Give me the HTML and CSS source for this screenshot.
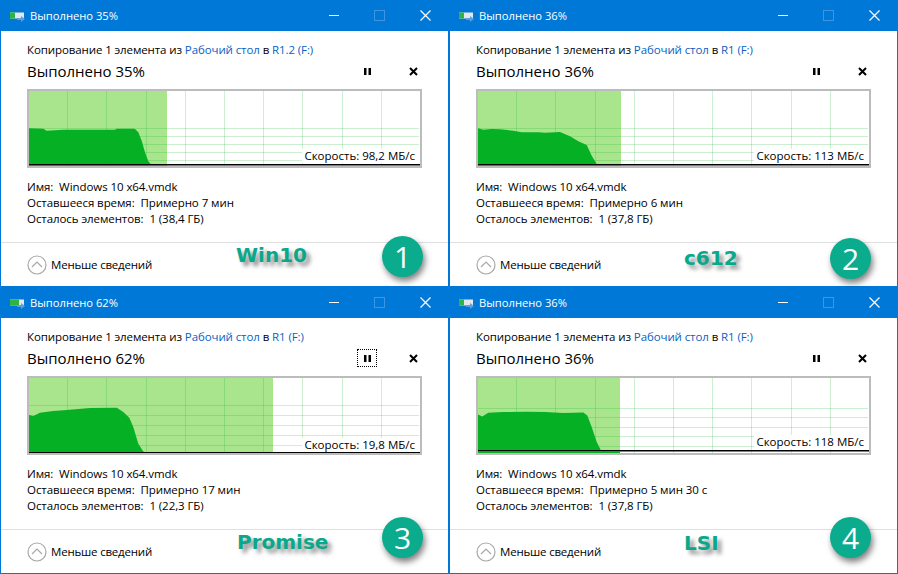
FILE: index.html
```html
<!DOCTYPE html>
<html lang="ru">
<head>
  <meta charset="UTF-8">
  <title>Копирование файлов</title>
  <link rel="stylesheet" href="styles.css">
</head>

<body>
  <div class="desktop">

    <!-- Win10 -->
    <div class="window">
      <div class="titlebar">
        <svg class="app-icon" width="16" height="14" viewBox="0 0 16 14"><rect x="0" y="3.500" width="14" height="6" fill="#e4e8ea"/><rect x="0" y="3.500" width="5" height="6" fill="#2fb344"/><path d="M7 9h4V7l4 3-4 3v-2H7z" fill="#5b9fdf"/></svg>
        <span class="title">Выполнено 35%</span>
        <div class="win-buttons">
          <span class="win-min"></span>
          <span class="win-max"></span>
          <svg class="win-close" width="11" height="11" viewBox="0 0 11 11"><path d="M.5.5l10 10M10.500.5l-10 10" stroke="#fff" stroke-width="1.200" fill="none"/></svg>
        </div>
      </div>
      <div class="content">
        <div class="copy-line">Копирование 1 элемента из <a>Рабочий стол</a> в <a>R1.2 (F:)</a></div>
        <div class="status-row">
          <span class="status">Выполнено 35%</span>
          <div class="controls">
            <span class="ctl"><svg width="9" height="9" viewBox="0 0 9 9"><path d="M1 1h2.500v7H1zM5.500 1H8v7H5.500z" fill="#000"/></svg></span>
            <span class="ctl"><svg width="9" height="9" viewBox="0 0 9 9"><path d="M1 1l7 7M8 1L1 8" stroke="#000" stroke-width="2" fill="none"/></svg></span>
          </div>
        </div>
        <div class="chart">
          <svg width="391" height="75" viewBox="0 0 391 75">
            <rect class="done" width="138" height="75"/>
            <path class="grid" d="M38.500 0v75M77.500 0v75M117.500 0v75M156.500 0v75M195.500 0v75M234.500 0v75M273.500 0v75M313.500 0v75M352.500 0v75M0 37.500h390M0 45.500h390M0 53.500h390M0 61.500h390M0 69.500h390"/>
            <path class="flow" d="M0 37.300L14.300 37.700L17.700 39.700L34.300 38.700H86L87.700 37.700H104.300L106 38L109.300 41.300L112.700 49.700L116 61.300L119.300 70.300L122.700 74H0Z"/>
            <rect x="0" y="73" width="391" height="1.500"/>
          </svg>
          <span class="speed">Скорость: 98,2 МБ/с</span>
        </div>
        <div class="details">
          <div>Имя:&nbsp; Windows 10 x64.vmdk</div>
          <div>Оставшееся время:&nbsp; Примерно 7 мин</div>
          <div>Осталось элементов:&nbsp; 1 (38,4 ГБ)</div>
        </div>
      </div>
      <div class="footer">
        <svg width="20" height="20" viewBox="0 0 20 20"><circle cx="10" cy="10" r="9" fill="none" stroke="#a8a8a8" stroke-width="1.200"/><path d="M5 12l5-5 5 5" fill="none" stroke="#a8a8a8" stroke-width="1.200"/></svg>
        <span>Меньше сведений</span>
      </div>
      <span class="mark mark-1">Win10</span>
      <span class="badge badge-1">1</span>
    </div>

    <!-- c612 -->
    <div class="window">
      <div class="titlebar">
        <svg class="app-icon" width="16" height="14" viewBox="0 0 16 14"><rect x="0" y="3.500" width="14" height="6" fill="#e4e8ea"/><rect x="0" y="3.500" width="5" height="6" fill="#2fb344"/><path d="M7 9h4V7l4 3-4 3v-2H7z" fill="#5b9fdf"/></svg>
        <span class="title">Выполнено 36%</span>
        <div class="win-buttons">
          <span class="win-min"></span>
          <span class="win-max"></span>
          <svg class="win-close" width="11" height="11" viewBox="0 0 11 11"><path d="M.5.5l10 10M10.500.5l-10 10" stroke="#fff" stroke-width="1.200" fill="none"/></svg>
        </div>
      </div>
      <div class="content">
        <div class="copy-line">Копирование 1 элемента из <a>Рабочий стол</a> в <a>R1 (F:)</a></div>
        <div class="status-row">
          <span class="status">Выполнено 36%</span>
          <div class="controls">
            <span class="ctl"><svg width="9" height="9" viewBox="0 0 9 9"><path d="M1 1h2.500v7H1zM5.500 1H8v7H5.500z" fill="#000"/></svg></span>
            <span class="ctl"><svg width="9" height="9" viewBox="0 0 9 9"><path d="M1 1l7 7M8 1L1 8" stroke="#000" stroke-width="2" fill="none"/></svg></span>
          </div>
        </div>
        <div class="chart">
          <svg width="391" height="75" viewBox="0 0 391 75">
            <rect class="done" width="143" height="75"/>
            <path class="grid" d="M38.500 0v75M77.500 0v75M117.500 0v75M156.500 0v75M195.500 0v75M234.500 0v75M273.500 0v75M313.500 0v75M352.500 0v75M0 37.500h390M0 45.500h390M0 53.500h390M0 61.500h390M0 69.500h390"/>
            <path class="flow" d="M0 37.300L5.300 38.700L13.700 38L22 38.300L35.300 39.700L43.700 41.300H60.300L67 41.700L82 41L92 45.300L100.300 50.300L108.700 54L113.700 64.700L118.700 73L120.300 74H0Z"/>
            <rect x="0" y="73" width="391" height="1.500"/>
            <rect class="flow" x="0" y="74.500" width="143" height=".5"/>
          </svg>
          <span class="speed">Скорость: 113 МБ/с</span>
        </div>
        <div class="details">
          <div>Имя:&nbsp; Windows 10 x64.vmdk</div>
          <div>Оставшееся время:&nbsp; Примерно 6 мин</div>
          <div>Осталось элементов:&nbsp; 1 (37,8 ГБ)</div>
        </div>
      </div>
      <div class="footer">
        <svg width="20" height="20" viewBox="0 0 20 20"><circle cx="10" cy="10" r="9" fill="none" stroke="#a8a8a8" stroke-width="1.200"/><path d="M5 12l5-5 5 5" fill="none" stroke="#a8a8a8" stroke-width="1.200"/></svg>
        <span>Меньше сведений</span>
      </div>
      <span class="mark mark-2">c612</span>
      <span class="badge badge-2">2</span>
    </div>

    <!-- Promise -->
    <div class="window">
      <div class="titlebar">
        <svg class="app-icon" width="16" height="14" viewBox="0 0 16 14"><rect x="0" y="3.500" width="14" height="6" fill="#e4e8ea"/><rect x="0" y="3.500" width="9" height="6" fill="#2fb344"/><path d="M7 9h4V7l4 3-4 3v-2H7z" fill="#5b9fdf"/></svg>
        <span class="title">Выполнено 62%</span>
        <div class="win-buttons">
          <span class="win-min"></span>
          <span class="win-max"></span>
          <svg class="win-close" width="11" height="11" viewBox="0 0 11 11"><path d="M.5.5l10 10M10.500.5l-10 10" stroke="#fff" stroke-width="1.200" fill="none"/></svg>
        </div>
      </div>
      <div class="content">
        <div class="copy-line">Копирование 1 элемента из <a>Рабочий стол</a> в <a>R1 (F:)</a></div>
        <div class="status-row">
          <span class="status">Выполнено 62%</span>
          <div class="controls">
            <span class="ctl ctl-focus"><svg width="9" height="9" viewBox="0 0 9 9"><path d="M1 1h2.500v7H1zM5.500 1H8v7H5.500z" fill="#000"/></svg></span>
            <span class="ctl"><svg width="9" height="9" viewBox="0 0 9 9"><path d="M1 1l7 7M8 1L1 8" stroke="#000" stroke-width="2" fill="none"/></svg></span>
          </div>
        </div>
        <div class="chart">
          <svg width="391" height="75" viewBox="0 0 391 75">
            <rect class="done" width="244" height="75"/>
            <path class="grid" d="M38.500 0v75M77.500 0v75M117.500 0v75M156.500 0v75M195.500 0v75M234.500 0v75M273.500 0v75M313.500 0v75M352.500 0v75M0 27.500h390M0 37.500h390M0 47.500h390M0 57.500h390M0 67.500h390"/>
            <path class="flow" d="M0 37L4.300 38L11 34.700L24.300 33L37.700 32L61 30L87.700 29.700L94.300 34L100.300 39.700L104.300 49L109.300 65.700L114.300 73.400L116.700 75H0Z"/>
            <rect x="0" y="74" width="391" height="1.500"/>
          </svg>
          <span class="speed speed-low">Скорость: 19,8 МБ/с</span>
        </div>
        <div class="details">
          <div>Имя:&nbsp; Windows 10 x64.vmdk</div>
          <div>Оставшееся время:&nbsp; Примерно 17 мин</div>
          <div>Осталось элементов:&nbsp; 1 (22,3 ГБ)</div>
        </div>
      </div>
      <div class="footer">
        <svg width="20" height="20" viewBox="0 0 20 20"><circle cx="10" cy="10" r="9" fill="none" stroke="#a8a8a8" stroke-width="1.200"/><path d="M5 12l5-5 5 5" fill="none" stroke="#a8a8a8" stroke-width="1.200"/></svg>
        <span>Меньше сведений</span>
      </div>
      <span class="mark mark-3">Promise</span>
      <span class="badge badge-3">3</span>
    </div>

    <!-- LSI -->
    <div class="window">
      <div class="titlebar">
        <svg class="app-icon" width="16" height="14" viewBox="0 0 16 14"><rect x="0" y="3.500" width="14" height="6" fill="#e4e8ea"/><rect x="0" y="3.500" width="5" height="6" fill="#2fb344"/><path d="M7 9h4V7l4 3-4 3v-2H7z" fill="#5b9fdf"/></svg>
        <span class="title">Выполнено 36%</span>
        <div class="win-buttons">
          <span class="win-min"></span>
          <span class="win-max"></span>
          <svg class="win-close" width="11" height="11" viewBox="0 0 11 11"><path d="M.5.5l10 10M10.500.5l-10 10" stroke="#fff" stroke-width="1.200" fill="none"/></svg>
        </div>
      </div>
      <div class="content">
        <div class="copy-line">Копирование 1 элемента из <a>Рабочий стол</a> в <a>R1 (F:)</a></div>
        <div class="status-row">
          <span class="status">Выполнено 36%</span>
          <div class="controls">
            <span class="ctl"><svg width="9" height="9" viewBox="0 0 9 9"><path d="M1 1h2.500v7H1zM5.500 1H8v7H5.500z" fill="#000"/></svg></span>
            <span class="ctl"><svg width="9" height="9" viewBox="0 0 9 9"><path d="M1 1l7 7M8 1L1 8" stroke="#000" stroke-width="2" fill="none"/></svg></span>
          </div>
        </div>
        <div class="chart">
          <svg width="391" height="75" viewBox="0 0 391 75">
            <rect class="done" width="142" height="75"/>
            <path class="grid" d="M38.500 0v75M77.500 0v75M117.500 0v75M156.500 0v75M195.500 0v75M234.500 0v75M273.500 0v75M313.500 0v75M352.500 0v75M0 30.500h390M0 39.500h390M0 49.500h390M0 58.500h390M0 68.500h390"/>
            <path class="flow" d="M0 36.400L4.300 38.400L10.300 34.700L25.300 34L48.700 33.700L67 34L85.300 35L105.300 34.400L109.300 37.400L113.700 49L118.700 64L123 72.400H0Z"/>
            <rect x="0" y="72" width="391" height="1.500"/>
            <rect class="flow" x="0" y="73.500" width="142" height="1.500"/>
          </svg>
          <span class="speed speed-high">Скорость: 118 МБ/с</span>
        </div>
        <div class="details">
          <div>Имя:&nbsp; Windows 10 x64.vmdk</div>
          <div>Оставшееся время:&nbsp; Примерно 5 мин 30 с</div>
          <div>Осталось элементов:&nbsp; 1 (37,8 ГБ)</div>
        </div>
      </div>
      <div class="footer">
        <svg width="20" height="20" viewBox="0 0 20 20"><circle cx="10" cy="10" r="9" fill="none" stroke="#a8a8a8" stroke-width="1.200"/><path d="M5 12l5-5 5 5" fill="none" stroke="#a8a8a8" stroke-width="1.200"/></svg>
        <span>Меньше сведений</span>
      </div>
      <span class="mark mark-4">LSI</span>
      <span class="badge badge-4">4</span>
    </div>

  </div>
</body>
</html>
```

FILE: styles.css
```css
body {
  margin: 0;
  background-color: #fff;
  font-family: "Open Sans", sans-serif;
  font-size: 11.5px;
  color: #000;
}

.desktop {
  display: grid;
  grid-template-columns: 449px 449px;
  grid-template-rows: 287px 287px;
  width: 898px;
  height: 574px;
  overflow: hidden;
}

.window {
  position: relative;
  display: flex;
  flex-direction: column;
  box-sizing: border-box;
  border: 1px solid #0078d7;
  border-top: none;
  background-color: #fff;
}

.titlebar {
  display: flex;
  align-items: center;
  height: 31px;
  margin: 0 -1px;
  padding-left: 10px;
  background-color: #0078d7;
  color: #fff;
}

.app-icon {
  margin-right: 4px;
}

.title {
  flex: 1;
  font-size: 11.2px;
}

.win-buttons {
  display: flex;
  align-items: center;
}

.win-min {
  width: 10px;
  height: 1px;
  margin-right: 35px;
  background-color: #fff;
}

.win-max {
  width: 9px;
  height: 9px;
  margin-right: 35px;
  border: 1px solid #3f96e0;
}

.win-close {
  margin-right: 18px;
}

.content {
  flex: 1;
  padding: 11px 26px 0;
}

.copy-line {
  height: 16px;
  line-height: 16px;
  letter-spacing: -0.1px;
  white-space: nowrap;
}

.copy-line a {
  color: #0a5fc4;
}

.status-row {
  display: flex;
  align-items: center;
  justify-content: space-between;
  height: 26px;
}

.status {
  font-size: 15px;
}

.controls {
  display: flex;
  gap: 26px;
  margin-right: -1px;
}

.ctl {
  display: flex;
  align-items: center;
  justify-content: center;
  box-sizing: border-box;
  width: 20px;
  height: 18px;
}

.ctl-focus {
  outline: 1px dotted #000;
  outline-offset: -1px;
}

.chart {
  position: relative;
  box-sizing: border-box;
  width: 395px;
  height: 79px;
  margin-top: 5px;
  border: 2px solid #bcbcbc;
}

.chart svg {
  display: block;
}

.done {
  fill: #a9e58d;
}

.grid {
  stroke: #00b020;
  stroke-opacity: 0.2;
  fill: none;
}

.flow {
  fill: #06b025;
}

.speed {
  position: absolute;
  right: 1px;
  bottom: 3px;
  padding: 0 4px 0 2px;
  background-color: #fff;
  line-height: 14px;
  white-space: nowrap;
}

.speed-low {
  bottom: 1px;
}

.speed-high {
  bottom: 4px;
}

.details {
  margin-top: 11px;
  line-height: 16px;
  letter-spacing: -0.07px;
  white-space: nowrap;
}

.footer {
  display: flex;
  align-items: center;
  gap: 4px;
  height: 44px;
  padding-left: 26px;
  border-top: 1px solid #dfdfdf;
  box-sizing: border-box;
  letter-spacing: -0.2px;
}

.mark {
  position: absolute;
  font-family: "DejaVu Sans", sans-serif;
  font-weight: bold;
  font-size: 20px;
  line-height: 24px;
  color: #0aa88a;
  text-shadow: 4px 4px 4px rgba(0, 0, 0, 0.45);
}

.mark-1 { left: 235px; top: 243px; }
.mark-2 { left: 234px; top: 246px; }
.mark-3 { left: 236px; top: 243px; }
.mark-4 { left: 234px; top: 244px; }

.badge {
  position: absolute;
  display: flex;
  align-items: center;
  justify-content: center;
  width: 41px;
  height: 41px;
  border-radius: 50%;
  background-color: #0bab8e;
  color: #fff;
  font-size: 30px;
  box-shadow: 2px 4px 6px rgba(0, 0, 0, 0.5);
}

.badge-1 { left: 381px; top: 236px; }
.badge-2 { left: 380px; top: 238px; }
.badge-3 { left: 381px; top: 230px; }
.badge-4 { left: 380px; top: 230px; }
```
